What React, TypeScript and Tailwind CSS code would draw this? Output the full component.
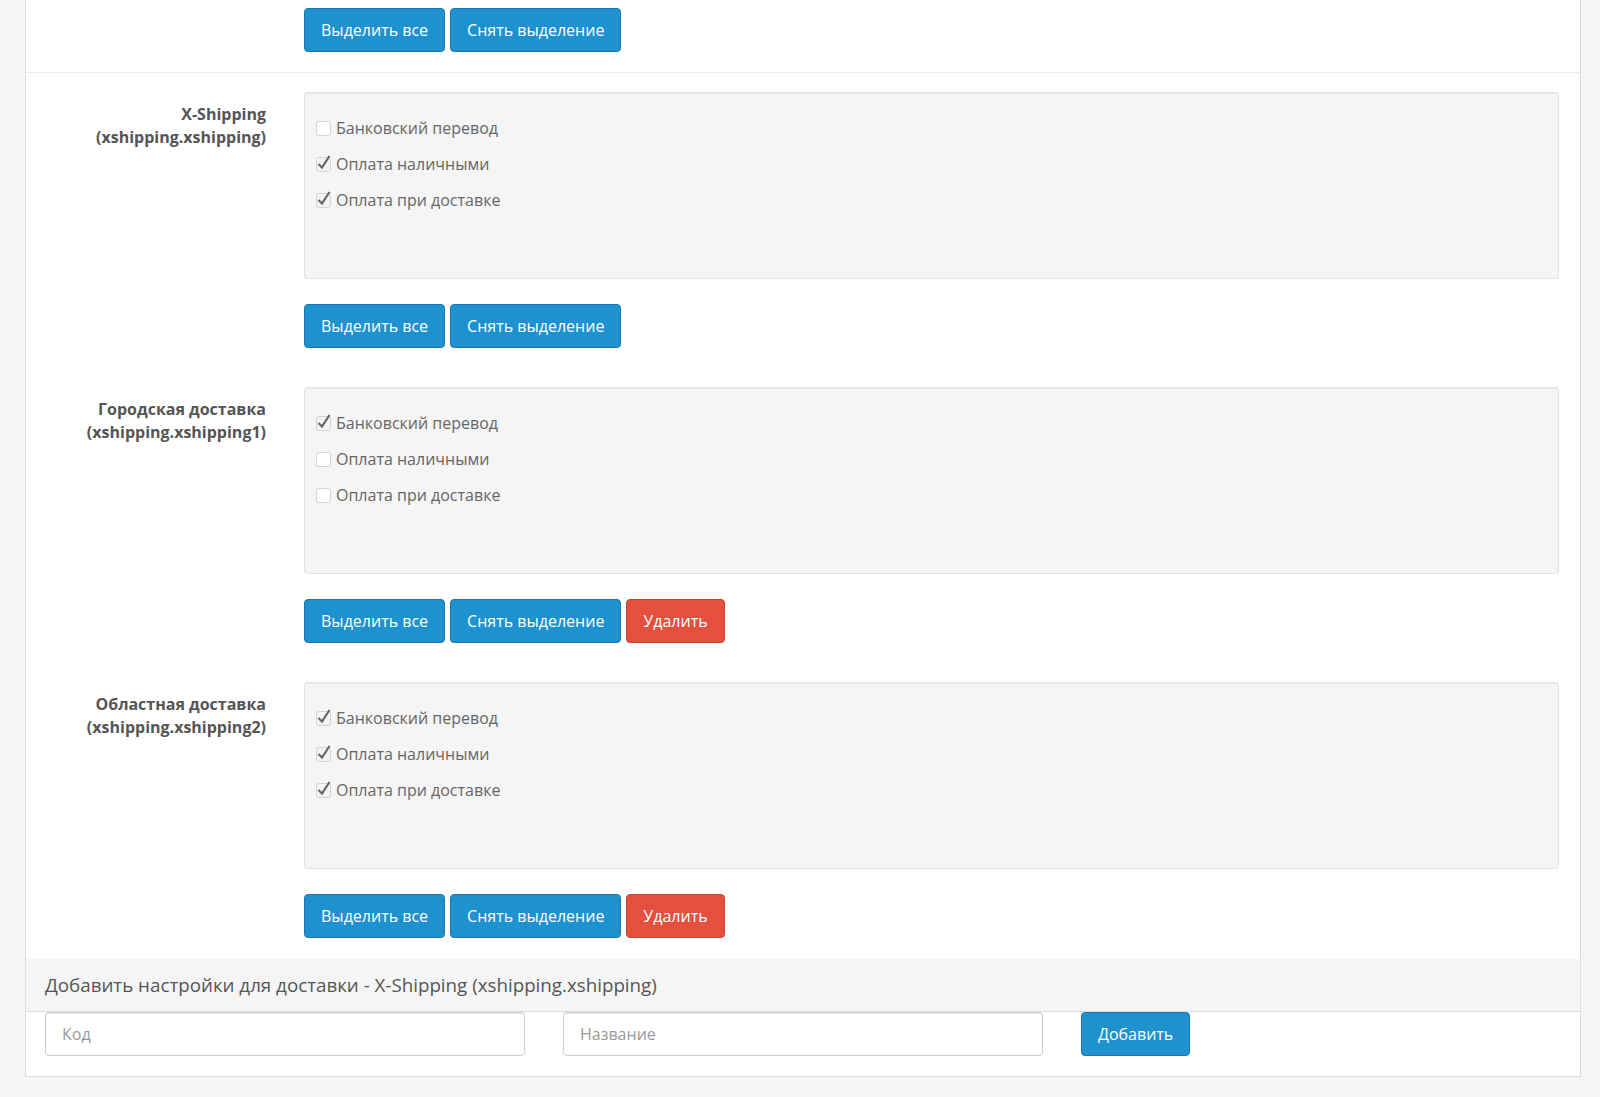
import React from 'react';

type Method = { name: string; checked: boolean };
type Group = { title: string; code: string; methods: Method[]; removable: boolean };

const groups: Group[] = [
  {
    title: 'X-Shipping',
    code: '(xshipping.xshipping)',
    removable: false,
    methods: [
      { name: 'Банковский перевод', checked: false },
      { name: 'Оплата наличными', checked: true },
      { name: 'Оплата при доставке', checked: true },
    ],
  },
  {
    title: 'Городская доставка',
    code: '(xshipping.xshipping1)',
    removable: true,
    methods: [
      { name: 'Банковский перевод', checked: true },
      { name: 'Оплата наличными', checked: false },
      { name: 'Оплата при доставке', checked: false },
    ],
  },
  {
    title: 'Областная доставка',
    code: '(xshipping.xshipping2)',
    removable: true,
    methods: [
      { name: 'Банковский перевод', checked: true },
      { name: 'Оплата наличными', checked: true },
      { name: 'Оплата при доставке', checked: true },
    ],
  },
];

const Check: React.FC<{ on: boolean }> = ({ on }) => (
  <svg width="18" height="18" viewBox="0 0 18 18" className="shrink-0">
    <rect x="1.5" y="2.5" width="14" height="14" rx="2" fill={on ? '#f3f3f3' : '#ffffff'} stroke="#d3d3d3" />
    {on && <path d="M3.5 9 L7 12.5 L14.5 1" fill="none" stroke="#666" strokeWidth="2.2" />}
  </svg>
);

const Btn: React.FC<{ children: React.ReactNode; danger?: boolean }> = ({ children, danger }) => (
  <button
    className={
      danger
        ? 'h-[44px] px-[16px] rounded-[4px] border border-[#c9432f] bg-[#e3503e] text-white text-[16px]'
        : 'h-[44px] px-[16px] rounded-[4px] border border-[#1978ab] bg-[#1e91cf] text-white text-[16px]'
    }
  >
    {children}
  </button>
);

const Actions: React.FC<{ removable?: boolean }> = ({ removable }) => (
  <div className="flex gap-[5px]">
    <Btn>Выделить все</Btn>
    <Btn>Снять выделение</Btn>
    {removable && <Btn danger>Удалить</Btn>}
  </div>
);

export default function App() {
  return (
    <div className="min-h-screen bg-[#f5f5f5] pl-[25px] pr-[19px] pb-[20px]" style={{ fontFamily: '"Open Sans", sans-serif' }}>
      <div className="bg-white border-x border-b border-[#ddd]">
        {/* tail of the previous group */}
        <div className="pt-[8px] pb-[20px] pl-[278px]">
          <Actions />
        </div>

        <div className="border-t border-[#ededed] pt-[19px] pb-[21px]">
          {groups.map((g, i) => (
            <div key={g.code} className={i > 0 ? 'flex mt-[39px]' : 'flex'}>
              <div className="w-[259px] pr-[19px] pt-[11px] text-right font-bold text-[16px] leading-[22.5px] text-[#555]">
                <div>{g.title}</div>
                <div>{g.code}</div>
              </div>
              <div className="flex-1 pl-[19px] pr-[21px]">
                <div className="h-[187px] rounded-[3px] border border-[#e3e3e3] bg-[#f5f5f5] px-[10px] pt-[24px] shadow-[inset_0_1px_1px_rgba(0,0,0,0.05)] flex flex-col gap-[15px]">
                  {g.methods.map((m) => (
                    <label key={m.name} className="flex items-center gap-[3px] h-[21px] text-[16px] text-[#666]">
                      <Check on={m.checked} />
                      <span>{m.name}</span>
                    </label>
                  ))}
                </div>
                <div className="mt-[25px]">
                  <Actions removable={g.removable} />
                </div>
              </div>
            </div>
          ))}
        </div>

        <div className="bg-[#f5f5f5] border-b border-[#ddd] h-[53px] flex items-center px-[19px] text-[18.75px] text-[#555]">
          Добавить настройки для доставки - X-Shipping (xshipping.xshipping)
        </div>
        <div className="grid grid-cols-3 pb-[20px]">
          <div className="px-[19px]">
            <input
              placeholder="Код"
              className="w-full h-[44px] rounded-[4px] border border-[#ccc] px-[16px] text-[16px] placeholder:text-[#999] shadow-[inset_0_1px_1px_rgba(0,0,0,0.075)]"
            />
          </div>
          <div className="px-[19px]">
            <input
              placeholder="Название"
              className="w-full h-[44px] rounded-[4px] border border-[#ccc] px-[16px] text-[16px] placeholder:text-[#999] shadow-[inset_0_1px_1px_rgba(0,0,0,0.075)]"
            />
          </div>
          <div className="px-[19px]">
            <Btn>Добавить</Btn>
          </div>
        </div>
      </div>
    </div>
  );
}
